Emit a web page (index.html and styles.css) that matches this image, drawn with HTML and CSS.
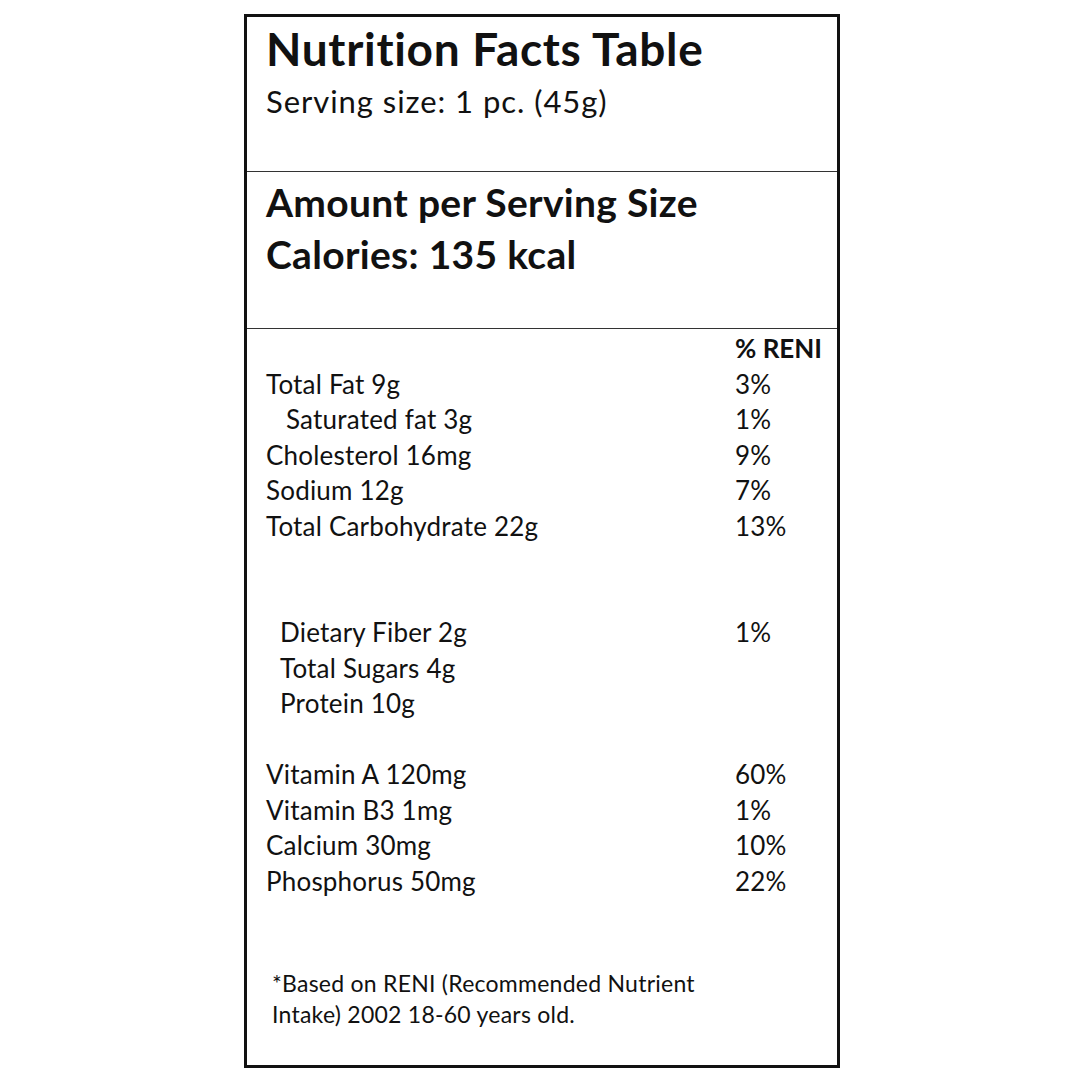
FILE: index.html
```html
<!DOCTYPE html>
<html>
<head>
<meta charset="utf-8">
<link rel="stylesheet" href="styles.css">
</head>
<body>
<div class="label">
  <section class="head">
    <h1 class="title">Nutrition Facts Table</h1>
    <p class="serving">Serving size: 1 pc. (45g)</p>
  </section>
  <section class="amount">
    <p class="big">Amount per Serving Size</p>
    <p class="big">Calories: 135 kcal</p>
  </section>
  <section class="nutrients">
    <div class="row"><span></span><span class="pct hdr">% RENI</span></div>
    <div class="row"><span>Total Fat 9g</span><span class="pct">3%</span></div>
    <div class="row"><span class="ind1">Saturated fat 3g</span><span class="pct">1%</span></div>
    <div class="row"><span>Cholesterol 16mg</span><span class="pct">9%</span></div>
    <div class="row"><span>Sodium 12g</span><span class="pct">7%</span></div>
    <div class="row"><span>Total Carbohydrate 22g</span><span class="pct">13%</span></div>
    <div class="row"></div>
    <div class="row"></div>
    <div class="row"><span class="ind2">Dietary Fiber 2g</span><span class="pct">1%</span></div>
    <div class="row"><span class="ind2">Total Sugars 4g</span><span class="pct"></span></div>
    <div class="row"><span class="ind2">Protein 10g</span><span class="pct"></span></div>
    <div class="row"></div>
    <div class="row"><span>Vitamin A 120mg</span><span class="pct">60%</span></div>
    <div class="row"><span>Vitamin B3 1mg</span><span class="pct">1%</span></div>
    <div class="row"><span>Calcium 30mg</span><span class="pct">10%</span></div>
    <div class="row"><span>Phosphorus 50mg</span><span class="pct">22%</span></div>
    <p class="note">*Based on RENI (Recommended Nutrient<br>Intake) 2002 18-60 years old.</p>
  </section>
</div>
</body>
</html>
```
FILE: styles.css
```css
html, body {
  margin: 0;
  padding: 0;
  background: #fff;
}
body {
  font-family: Lato, "Open Sans", "Liberation Sans", sans-serif;
  color: #111;
}
p, h1 { margin: 0; }
.label {
  box-sizing: border-box;
  width: 596px;
  height: 1054px;
  margin: 14px 0 0 244px;
  border: 3px solid #111;
  display: flex;
  flex-direction: column;
}
.head {
  height: 155px;
  box-sizing: border-box;
  border-bottom: 1.5px solid #333;
  padding: 6px 0 0 19px;
}
.title {
  font-size: 46px;
  font-weight: 700;
  letter-spacing: 0.7px;
  line-height: 52px;
}
.serving {
  font-size: 31px;
  line-height: 40px;
  letter-spacing: 0.95px;
  margin-top: 6px;
}
.amount {
  height: 157px;
  box-sizing: border-box;
  border-bottom: 1.5px solid #333;
  padding: 4px 0 0 19px;
}
.big {
  font-size: 39px;
  font-weight: 700;
  line-height: 52px;
  letter-spacing: 0.3px;
}
.nutrients {
  padding: 2px 0 0 19px;
  font-size: 26px;
}
.row {
  display: grid;
  grid-template-columns: 469px 1fr;
  height: 35.5px;
  line-height: 35.5px;
  letter-spacing: 0.2px;
}
.pct.hdr { font-weight: 700; letter-spacing: 0; }
.ind1 { padding-left: 20px; }
.ind2 { padding-left: 14px; }
.note {
  margin: 69px 0 0 6px;
  font-size: 23px;
  line-height: 31px;
  letter-spacing: 0.25px;
}
```
